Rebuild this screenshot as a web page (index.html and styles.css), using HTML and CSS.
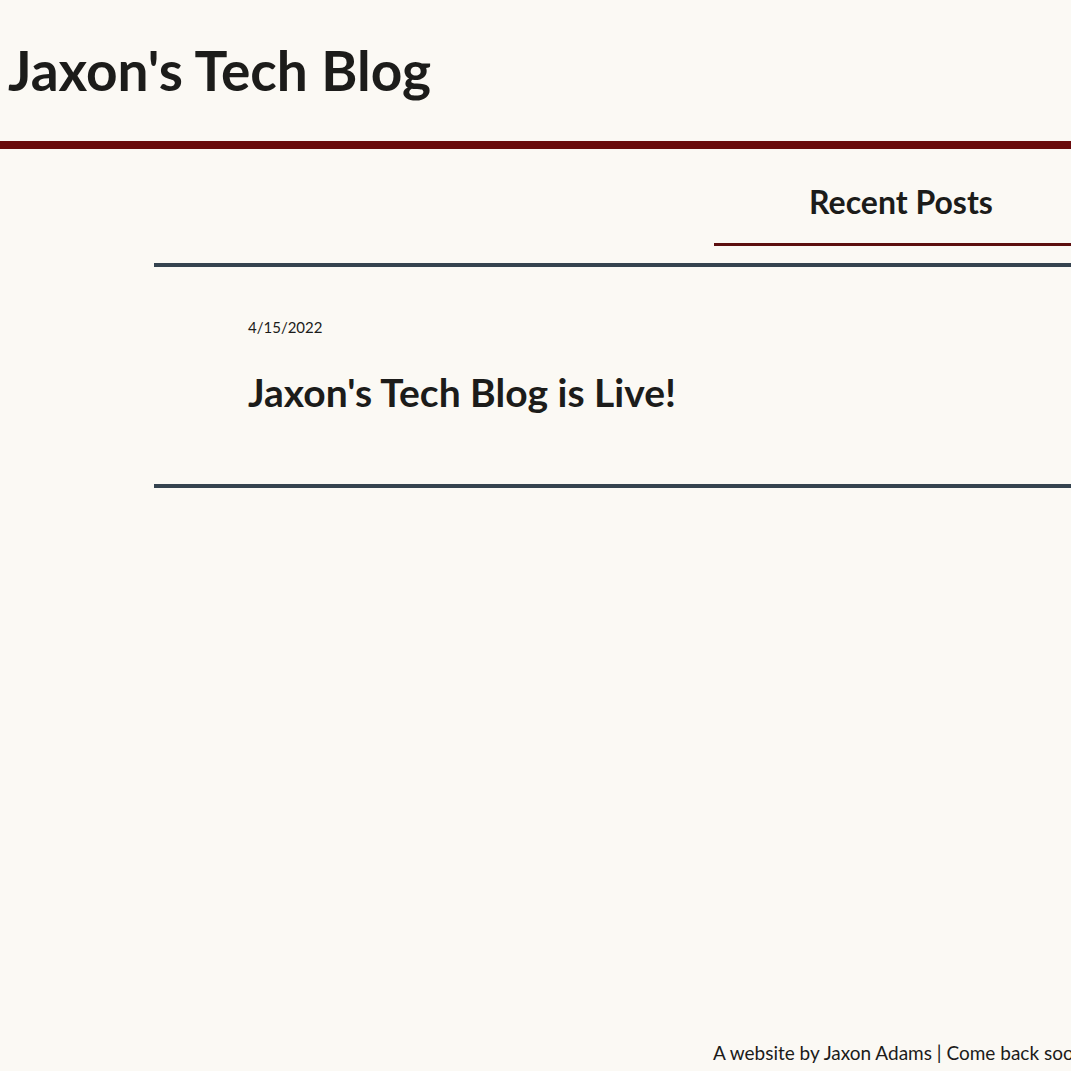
FILE: index.html
```html
<!DOCTYPE html>
<html lang="en">
<head>
<meta charset="utf-8">
<title>Jaxon's Tech Blog</title>
<link rel="stylesheet" href="styles.css">
</head>
<body>
<div class="page">
  <header class="site-header">
    <h1 class="site-title">Jaxon's Tech Blog</h1>
  </header>
  <main class="content">
    <div class="section-head">
      <h2 class="section-title">Recent Posts</h2>
    </div>
    <article class="post">
      <p class="post-date">4/15/2022</p>
      <h3 class="post-title">Jaxon's Tech Blog is Live!</h3>
    </article>
  </main>
  <footer class="site-footer">A website by Jaxon Adams | Come back soon!</footer>
</div>
</body>
</html>
```

FILE: styles.css
```css
html, body {
  margin: 0;
  padding: 0;
  overflow: hidden;
}
body {
  background: #fbf9f4;
  color: #1c1c1a;
  font-family: Lato, "Open Sans", sans-serif;
}
.page {
  min-height: 100vh;
  display: flex;
  flex-direction: column;
}
.site-header {
  height: 141px;
  border-bottom: 8px solid #6a0b0b;
  padding-left: 8px;
  display: flex;
  align-items: flex-start;
}
.site-title {
  margin: 0;
  padding-top: 37px;
  font-size: 55px;
  font-weight: 700;
  line-height: 1.2;
  white-space: nowrap;
}
.content {
  flex: 1;
  margin-left: 154px;
  width: 1200px;
}
.section-head {
  margin-left: 560px;
  width: 374px;
  padding-top: 34px;
  border-bottom: 3px solid #5c0f0f;
  text-align: center;
}
.section-title {
  margin: 0;
  padding-bottom: 22px;
  font-size: 32px;
  font-weight: 700;
  line-height: 1.2;
}
.post {
  margin-top: 17px;
  border-top: 4px solid #35434f;
  border-bottom: 4px solid #35434f;
  padding: 51px 0 68px 94px;
}
.post-date {
  margin: 0;
  font-size: 15px;
  line-height: 18px;
}
.post-title {
  margin: 33px 0 0;
  font-size: 39px;
  font-weight: 700;
  line-height: 1.2;
  white-space: nowrap;
}
.site-footer {
  margin-left: 713px;
  padding-bottom: 6px;
  font-size: 19px;
  line-height: 24px;
  white-space: nowrap;
}
```
